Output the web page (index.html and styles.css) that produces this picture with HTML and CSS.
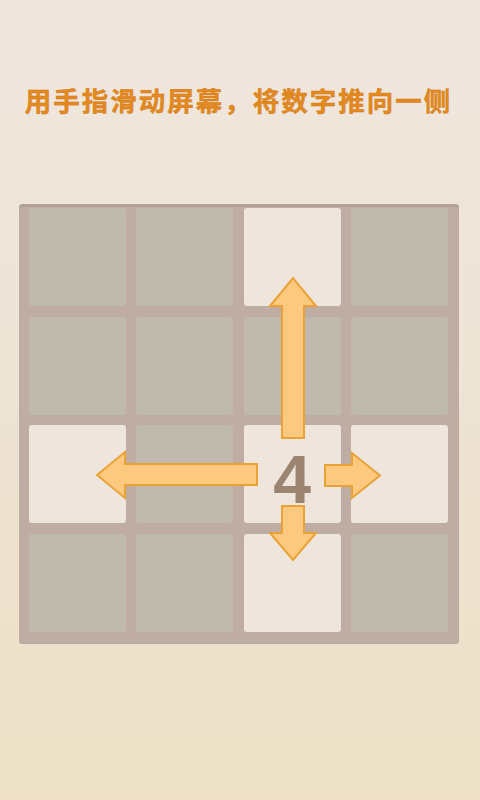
FILE: index.html
```html
<!DOCTYPE html>
<html lang="zh">
<head>
<meta charset="utf-8">
<link rel="stylesheet" href="styles.css">
</head>
<body>
<div class="page">
  <h1 class="title">用手指滑动屏幕，将数字推向一侧</h1>
  <div class="board">
    <div class="cell"></div>
    <div class="cell"></div>
    <div class="cell light"></div>
    <div class="cell"></div>
    <div class="cell"></div>
    <div class="cell"></div>
    <div class="cell"></div>
    <div class="cell"></div>
    <div class="cell light"></div>
    <div class="cell"></div>
    <div class="cell light num">4</div>
    <div class="cell light"></div>
    <div class="cell"></div>
    <div class="cell"></div>
    <div class="cell light"></div>
    <div class="cell"></div>
    <svg class="arrows" width="440" height="440" viewBox="0 0 440 440">
      <g class="arrow">
        <polygon points="263,234 263,102 251,102 274,74 297,102 285,102 285,234"/>
        <polygon points="306,261 333,261 333,249 361,271.5 333,294 333,282 306,282"/>
        <polygon points="263,302 285,302 285,329 297,329 274,356 251,329 263,329"/>
        <polygon points="238,260 106,260 106,248 78,271 106,294 106,281 238,281"/>
      </g>
    </svg>
  </div>
</div>
</body>
</html>
```
FILE: styles.css
```css
html, body {
  margin: 0;
  padding: 0;
}
.page {
  width: 480px;
  height: 800px;
  background: linear-gradient(180deg, #efe6de 0%, #eee3d3 55%, #ede0c5 100%);
  padding-top: 80px;
  box-sizing: border-box;
}
.title {
  margin: 0;
  height: 40px;
  line-height: 40px;
  font-family: "Noto Sans CJK SC", "Noto Sans", sans-serif;
  font-size: 26.5px;
  font-weight: 700;
  letter-spacing: 2px;
  color: #e3891f;
  text-align: center;
  padding-right: 3px;
  -webkit-text-stroke: 0.4px #d07a15;
}
.board {
  position: relative;
  margin: 84px 0 0 19px;
  width: 440px;
  height: 440px;
  box-sizing: border-box;
  padding: 4px 11px 12px 10px;
  background: #bfaca3;
  border-radius: 4px;
  box-shadow: inset 0 3px 0 #b2a196, inset 0 -1px 0 #b6a59b;
  display: grid;
  grid-template-columns: repeat(4, 97px);
  grid-template-rows: repeat(4, 98px);
  column-gap: 10.33px;
  row-gap: 10.67px;
}
.cell {
  background: #c0b9ae;
  border-radius: 3px;
}
.cell.light {
  background: #eee5dc;
}
.num {
  display: flex;
  align-items: center;
  justify-content: center;
  font-family: "Liberation Sans", Arial, sans-serif;
  font-weight: 700;
  font-size: 68px;
  color: #9b8571;
  padding-top: 10px;
  box-sizing: border-box;
}
.arrows {
  position: absolute;
  left: 0;
  top: 0;
  pointer-events: none;
}
.arrow polygon {
  fill: #fdc97e;
  stroke: #eaa236;
  stroke-width: 2;
  stroke-linejoin: miter;
}
```
